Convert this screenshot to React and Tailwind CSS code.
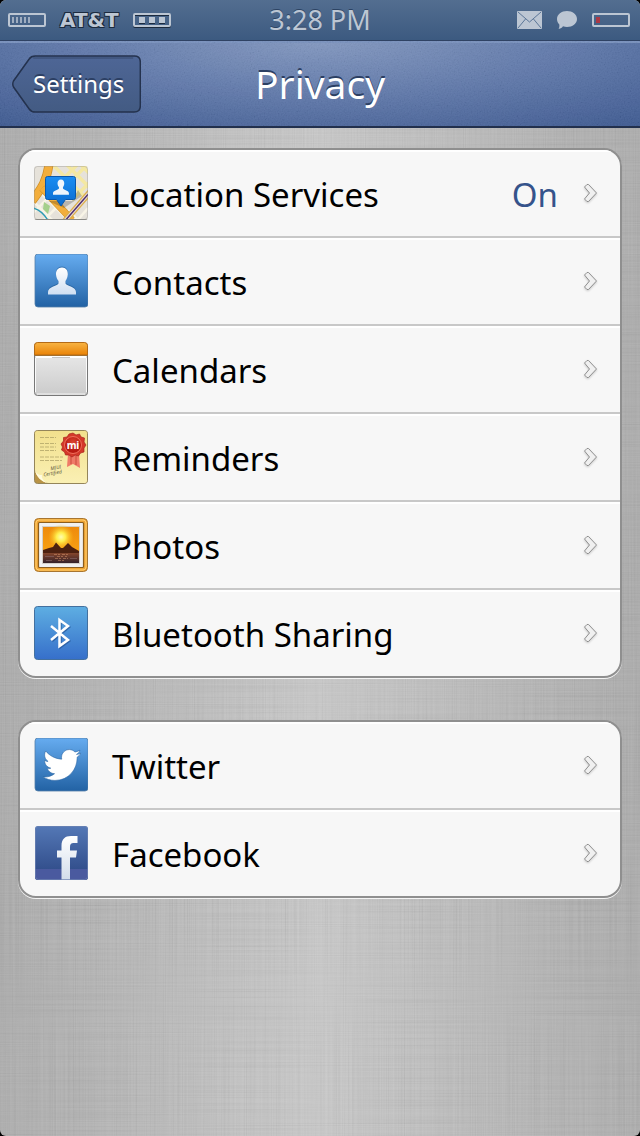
import React from 'react';
import { FaTwitter } from 'react-icons/fa';

// Brushed metal / grain overlay, stretched over its parent
const Texture = ({ id, frequency, opacity, octaves = 2 }) => (
  <svg className="pointer-events-none absolute inset-0 h-full w-full" aria-hidden="true">
    <filter id={id} x="0" y="0" width="100%" height="100%">
      <feTurbulence type="fractalNoise" baseFrequency={frequency} numOctaves={octaves} />
      <feColorMatrix type="matrix" values="1.6 0 0 0 -0.3  1.6 0 0 0 -0.3  1.6 0 0 0 -0.3  0 0 0 0 1" />
    </filter>
    <rect width="100%" height="100%" filter={`url(#${id})`} opacity={opacity} />
  </svg>
);

const Person = ({ fill, ...props }) => (
  <path
    fill={fill}
    d="M28 14 C32 14 34 17 33.800 21 C33.600 24 32.500 26 31.500 27.500 L31.500 30 C33 33 42 33 42 38.500 L42 41 L14 41 L14 38.500 C14 33 23 33 24.500 30 L24.500 27.500 C23.300 26 22.200 24 22 21 C21.800 17 24 14 28 14 Z"
    {...props}
  />
);

const IconFrame = ({ children }) => (
  <svg className="size-[54px] shrink-0" viewBox="0 0 54 54" aria-hidden="true">
    {children}
  </svg>
);

const LocationIcon = () => (
  <IconFrame>
    <defs>
      <clipPath id="loc-clip"><rect width="54" height="54" rx="3" /></clipPath>
      <linearGradient id="loc-pin" x1="0" y1="0" x2="0" y2="1">
        <stop offset="0" stopColor="#1b8df2" />
        <stop offset="1" stopColor="#0a6cd0" />
      </linearGradient>
    </defs>
    <g clipPath="url(#loc-clip)" fill="none">
      <rect width="54" height="54" fill="#e6e2da" />
      <path d="M20 0 L54 34 M32 -2 L58 24 M44 -4 L60 12 M54 -2 L30 22 M44 -2 L24 18 M60 12 L38 34" stroke="#f4e8a2" strokeWidth="3.500" />
      <path d="M0 36 L18 54 M6 26 L34 54 M-2 48 L14 32 M8 56 L26 38 M44 54 L34 44 M54 42 L42 56" stroke="#f8f4e6" strokeWidth="2.500" />
      <path d="M10 36 L16 40 L14 48 L9 43 Z" fill="#a5d08c" />
      <path d="M15 -2 C13 14 8 22 -2 35" stroke="#cf8e25" strokeWidth="9" />
      <path d="M15 -2 C13 14 8 22 -2 35" stroke="#f3ae3c" strokeWidth="7.500" />
      <path d="M8 22 L38 54" stroke="#d09229" strokeWidth="7" />
      <path d="M8 22 L38 54" stroke="#f3ae3c" strokeWidth="6" />
      <path d="M56 26 L30 56" stroke="#dcae4b" strokeWidth="6" />
      <path d="M56 26 L30 56" stroke="#eadfd8" strokeWidth="3.500" />
      <path d="M56 26 L30 56" stroke="#51306f" strokeWidth="1.500" />
      <path d="M-1 42 C7 44 11 49 15 56" stroke="#2a9bb5" strokeWidth="1.500" />
      <path d="M14 35 H38 L44 24 L48 30 L30 42 Z" fill="#000" opacity=".2" />
      <path d="M13.500 10.500 H39.500 Q41.500 10.500 41.500 12.500 V31.500 Q41.500 33.500 39.500 33.500 H31.500 L27 40 L22.500 33.500 H13.500 Q11.500 33.500 11.500 31.500 V12.500 Q11.500 10.500 13.500 10.500 Z" fill="url(#loc-pin)" stroke="#0a58ad" />
      <Person fill="#eef5fc" transform="translate(11 5.500) scale(.57)" />
      <path d="M0 53.500 H54" stroke="#8d8a85" />
    </g>
    <rect x=".5" y=".5" width="53" height="53" rx="3" fill="none" stroke="#8a8a8a" strokeOpacity=".35" />
  </IconFrame>
);

const ContactsIcon = () => (
  <IconFrame>
    <defs>
      <linearGradient id="con-bg" x1="0" y1="0" x2="0" y2="1">
        <stop offset="0" stopColor="#66acf0" />
        <stop offset="1" stopColor="#2262a4" />
      </linearGradient>
      <linearGradient id="con-fg" x1="0" y1="0" x2="0" y2="1">
        <stop offset="0" stopColor="#fff" />
        <stop offset="1" stopColor="#cfdff2" />
      </linearGradient>
    </defs>
    <rect x="1" width="53" height="53" rx="3" fill="url(#con-bg)" stroke="#537fa8" strokeWidth=".8" />
    <Person fill="#184f88" opacity=".5" transform="translate(0 -1.500)" />
    <Person fill="url(#con-fg)" transform="translate(0 -.5)" />
  </IconFrame>
);

const CalendarIcon = () => (
  <IconFrame>
    <defs>
      <linearGradient id="cal-top" x1="0" y1="0" x2="0" y2="1">
        <stop offset="0" stopColor="#f8b443" />
        <stop offset="1" stopColor="#e98206" />
      </linearGradient>
      <linearGradient id="cal-page" x1="0" y1="0" x2="0" y2="1">
        <stop offset="0" stopColor="#efefef" />
        <stop offset="1" stopColor="#cbcbcb" />
      </linearGradient>
    </defs>
    <rect x=".5" y="1" width="53" height="52.500" rx="3" fill="url(#cal-page)" stroke="#777" />
    <path d="M.5 13 V3.500 Q.5 .5 3.500 .5 H50.500 Q53.500 .5 53.500 3.500 V13 Z" fill="url(#cal-top)" stroke="#b46b16" />
    <path d="M1 13.500 H53" stroke="#a3702e" />
    <path d="M2 15 H52" stroke="#fff" strokeWidth="2" />
    <path d="M18 15.500 H36" stroke="#c4c4c4" />
    <path d="M1.500 16 V50 M52.500 16 V50" stroke="#fafafa" />
    <path d="M3 52 H51" stroke="#f3f3f3" />
  </IconFrame>
);

const RemindersIcon = () => (
  <IconFrame>
    <defs>
      <linearGradient id="rem-bg" x1="0" y1="0" x2="0" y2="1">
        <stop offset="0" stopColor="#f2e08d" />
        <stop offset="1" stopColor="#faf0b4" />
      </linearGradient>
      <radialGradient id="rem-seal" cy=".35">
        <stop offset="0" stopColor="#dc4532" />
        <stop offset="1" stopColor="#b81a12" />
      </radialGradient>
    </defs>
    <rect x=".5" y=".5" width="53" height="53" rx="3" fill="#b99345" stroke="#94855a" />
    <path d="M1 3 Q1 1 3 1 H51 Q53 1 53 3 V51 Q53 53 51 53 H14 C8 52 2 46 1 40 Z" fill="url(#rem-bg)" />
    <path d="M1 40 C2 43 4 45 8 45 C7 48 10 52 14 53 C7 52 2 46 1 40 Z" fill="#fffbe0" />
    <path d="M6 7.500 H22 M6 13.500 H22 M6 17 H22 M6 20.500 H22 M6 27 H29 M6 30.500 H28" stroke="#a99d62" strokeDasharray="4 1" opacity=".7" />
    <path d="M34 24 L33 37 L39 34 L46 38 L45 24 Z" fill="#ef7b68" />
    <path d="M37 26 V34 M42 26 V35" stroke="#c94c3b" />
    <path
      d="M39 3 L42 5 L45.500 4 L47 7 L50.500 8 L50 12 L52 15 L50 18 L50 22 L46.500 23 L44.500 26 L41 25 L38 27 L35 25 L31.500 25 L30.500 22 L27.500 20 L28.500 17 L27 14 L29.500 11 L29.500 7.500 L33 7 L35 4 Z"
      fill="#d4382a"
      stroke="#a8241c"
      strokeWidth=".7"
    />
    <circle cx="39" cy="15" r="8.500" fill="url(#rem-seal)" stroke="#ef705c" />
    <text x="39" y="19" textAnchor="middle" fill="#fff" className="font-['Noto_Sans',sans-serif] text-[10px] font-bold">mi</text>
    <g fill="#5d573a" className="font-['Noto_Sans',sans-serif] text-[5px] italic" transform="rotate(-10 18 42)">
      <text x="17" y="40">MIUI</text>
      <text x="9" y="45">Certified</text>
    </g>
  </IconFrame>
);

const PhotosIcon = () => (
  <IconFrame>
    <defs>
      <linearGradient id="pho-sky" x1="0" y1="0" x2="0" y2="1">
        <stop offset="0" stopColor="#ee8a0c" />
        <stop offset=".65" stopColor="#f7a013" />
        <stop offset="1" stopColor="#e36c0b" />
      </linearGradient>
      <linearGradient id="pho-sea" x1="0" y1="0" x2="0" y2="1">
        <stop offset="0" stopColor="#8d4a2c" />
        <stop offset="1" stopColor="#35222a" />
      </linearGradient>
      <radialGradient id="pho-sun">
        <stop offset="0" stopColor="#fffbb0" />
        <stop offset=".35" stopColor="#ffee4d" />
        <stop offset="1" stopColor="#f9b316" stopOpacity="0" />
      </radialGradient>
    </defs>
    <rect x=".5" y=".5" width="53" height="53" rx="4" fill="#f0a535" stroke="#a8752f" />
    <rect x="2" y="2" width="50" height="50" rx="3" fill="none" stroke="#ffcf70" />
    <rect x="4.500" y="4.500" width="45" height="45" rx="1" fill="#f1f1f1" stroke="#8c5e1e" strokeWidth="1.200" />
    <rect x="8.500" y="8.500" width="37" height="37" fill="url(#pho-sky)" stroke="#d4cfc8" />
    <circle cx="27" cy="19" r="13" fill="url(#pho-sun)" />
    <rect x="9" y="34" width="36" height="11" fill="url(#pho-sea)" />
    <path d="M9 35 V32 L15 30 L19 29 L22 24.500 L27 30 L29 30 L34 25 L38 29 L45 33 V35 Z" fill="#4c2110" />
    <path d="M20 36.500 H35 M23 38.500 H33 M21 40.500 H34 M24 42.500 H32" stroke="#dc9b72" strokeWidth=".8" strokeDasharray="3 1 2 2" opacity=".6" />
    <path d="M11 38.500 H20 M36 40.500 H43 M12 42.500 H18" stroke="#8a6a6b" opacity=".6" />
  </IconFrame>
);

const BluetoothIcon = () => (
  <IconFrame>
    <defs>
      <linearGradient id="blu-bg" x1="0" y1="0" x2="0" y2="1">
        <stop offset="0" stopColor="#5eaee2" />
        <stop offset="1" stopColor="#366fca" />
      </linearGradient>
    </defs>
    <rect x=".5" y=".5" width="53" height="53" rx="3" fill="url(#blu-bg)" stroke="#43709f" />
    <path d="M17 20 L34 34 L25.500 40 V14 L34 20 L17 34" fill="none" stroke="#1f4f90" strokeWidth="2.500" opacity=".6" transform="translate(1 1)" />
    <path d="M17 20 L34 34 L25.500 40 V14 L34 20 L17 34" fill="none" stroke="#fff" strokeWidth="2.500" />
  </IconFrame>
);

const TwitterIcon = () => (
  <IconFrame>
    <defs>
      <linearGradient id="twi-bg" x1="0" y1="0" x2="0" y2="1">
        <stop offset="0" stopColor="#66acf0" />
        <stop offset="1" stopColor="#2262a4" />
      </linearGradient>
    </defs>
    <rect x="1" width="53" height="53" rx="3" fill="url(#twi-bg)" stroke="#537fa8" strokeWidth=".8" />
    <FaTwitter x="9" y="8" size={38} color="#fff" stroke="#2a66a3" strokeWidth="8" />
  </IconFrame>
);

const FacebookIcon = () => (
  <IconFrame>
    <defs>
      <linearGradient id="fb-bg" x1="0" y1="0" x2="0" y2="1">
        <stop offset="0" stopColor="#5478b6" />
        <stop offset="1" stopColor="#2b4683" />
      </linearGradient>
      <linearGradient id="fb-fg" x1="0" y1="0" x2="0" y2="1">
        <stop offset="0" stopColor="#fff" />
        <stop offset="1" stopColor="#d3ddea" />
      </linearGradient>
      <clipPath id="fb-clip"><rect x="1" width="53" height="54" rx="3" /></clipPath>
    </defs>
    <g clipPath="url(#fb-clip)">
      <rect x="1" width="53" height="54" fill="url(#fb-bg)" />
      <rect x="1" y="43" width="53" height="11" fill="#4a5a9f" />
      <path d="M27.500 54 V31.500 H23 V24.500 H27.500 V20 C27.500 13 31 10 37 10 H43.500 V17 H39.500 C37 17 36 18.500 36 21 V24.500 H43 L42 31.500 H36 V54 Z" fill="url(#fb-fg)" />
    </g>
    <rect x="1.500" y=".5" width="52" height="53" rx="3" fill="none" stroke="#6d83b2" strokeOpacity=".7" />
  </IconFrame>
);

const Chevron = () => (
  <svg className="h-5 w-4 shrink-0 drop-shadow-[0_1px_1px_rgba(0,0,0,0.2)]" viewBox="0 0 16 20" aria-hidden="true">
    <path
      d="M5 1.500 L6.500 1.500 L14.500 10 L6.500 18.500 L5 18.500 L2.500 16 L7.500 10 L2.500 4 Z"
      fill="#f0f0f0"
      stroke="#8e8e8e"
      strokeLinejoin="round"
    />
  </svg>
);

const GROUPS = [
  [
    { label: 'Location Services', value: 'On', Icon: LocationIcon },
    { label: 'Contacts', Icon: ContactsIcon },
    { label: 'Calendars', Icon: CalendarIcon },
    { label: 'Reminders', Icon: RemindersIcon },
    { label: 'Photos', Icon: PhotosIcon },
    { label: 'Bluetooth Sharing', Icon: BluetoothIcon },
  ],
  [
    { label: 'Twitter', Icon: TwitterIcon },
    { label: 'Facebook', Icon: FacebookIcon },
  ],
];

const StatusBar = () => (
  <div className="grid h-10 grid-cols-[1fr_auto_1fr] items-center bg-linear-to-b from-[#536e90] to-[#3c5a80] px-2 text-[#bcc6d3]">
    <div className="flex items-center gap-[14px]">
      {/* Signal strength */}
      <svg className="h-[14px] w-[38px]" viewBox="0 0 38 14" aria-hidden="true">
        <rect x="1" y="1" width="36" height="12" rx="1" fill="none" stroke="currentColor" strokeWidth="2" />
        <path d="M5 4V10 M9 4V10 M13 4V10 M17 4V10 M21 4V10" stroke="currentColor" strokeWidth="1.500" />
      </svg>
      <span className="font-['DejaVu_Sans',sans-serif] text-[20px] leading-6 font-bold [text-shadow:1px_1px_0_#1c2b3f,-1px_-1px_0_#1c2b3f,1px_-1px_0_#1c2b3f,-1px_1px_0_#1c2b3f]">
        AT&amp;T
      </span>
      {/* Network type */}
      <svg className="h-[14px] w-[38px] drop-shadow-[0_1px_0_#1c2b3f]" viewBox="0 0 38 14" aria-hidden="true">
        <rect x="1" y="1" width="36" height="12" rx="1" fill="none" stroke="currentColor" strokeWidth="2" />
        <path d="M6 4h6v6h-6z M16 4h6v6h-6z M26 4h6v6h-6z" fill="currentColor" />
      </svg>
    </div>
    <time className="text-[27px] leading-8 [text-shadow:0_-1px_0_#2c4363]">3:28 PM</time>
    <div className="flex items-center justify-end gap-[15px]">
      <svg className="h-[18px] w-[25px]" viewBox="0 0 25 18" aria-hidden="true">
        <rect width="25" height="18" rx="1" fill="currentColor" />
        <path d="M1 1 L12.500 11 L24 1 M1 17 L8.500 8 M24 17 L16.500 8" fill="none" stroke="#5b7697" />
      </svg>
      <svg className="h-[18px] w-5" viewBox="0 0 20 18" aria-hidden="true">
        <path d="M10 0 C15.500 0 20 3.500 20 8 C20 12.500 15.500 16 10 16 C8.500 16 7.500 15.800 6 15.300 C5 17 4 17.500 1.500 18 C2.500 16.500 2.500 15 2.300 13.500 C.8 12 0 10 0 8 C0 3.500 4.500 0 10 0 Z" fill="currentColor" />
      </svg>
      {/* Battery, almost empty */}
      <svg className="mr-0.5 h-[14px] w-[38px]" viewBox="0 0 38 14" aria-hidden="true">
        <rect x="1" y="1" width="36" height="12" rx="1" fill="none" stroke="currentColor" strokeWidth="2" />
        <rect x="4" y="4" width="4" height="6" fill="#ab3946" />
      </svg>
    </div>
  </div>
);

const NavBar = () => (
  <header className="relative h-[88px] border-t border-b-2 border-t-[#2f4263] border-b-[#22304d] bg-[radial-gradient(ellipse_85%_140%_at_50%_0%,#8398c0_0%,#5d76a8_50%,#39558d_100%)] shadow-[inset_0_2px_0_#7991bd]">
    <Texture id="nav-grain" frequency="0.7" opacity="0.05" />
    <div className="relative grid h-full grid-cols-[1fr_auto_1fr] items-center px-[11px]">
      <button type="button" className="relative h-[58px] justify-self-start pr-[17px] pl-[22px] text-[24px] text-white [text-shadow:0_-2px_0_#2c3f63]">
        <svg className="absolute inset-0 h-full w-full" viewBox="0 0 129 58" preserveAspectRatio="none" aria-hidden="true">
          <defs>
            <linearGradient id="back-bg" x1="0" y1="0" x2="0" y2="1">
              <stop offset="0" stopColor="#4e6696" />
              <stop offset="1" stopColor="#435b83" />
            </linearGradient>
          </defs>
          <path
            d="M24 1 H122 Q128 1 128 7 V51 Q128 57 122 57 H24 Q20 57 18 54 L2.500 32 Q1 29 2.500 26 L18 4 Q20 1 24 1 Z"
            fill="url(#back-bg)"
            stroke="#24324e"
            strokeWidth="1.500"
          />
          <path d="M22 3 H121" stroke="#334669" strokeWidth="1.500" opacity=".6" />
        </svg>
        <span className="relative">Settings</span>
      </button>
      <h1 className="text-[39px] leading-10 text-white [text-shadow:0_-2px_0_#2c3f63]">Privacy</h1>
    </div>
  </header>
);

const SettingsRow = ({ label, value, Icon }) => (
  <li>
    <a href="#" className="flex h-[86px] items-center gap-6 pr-[22px] pb-px pl-[14px] shadow-[inset_0_2px_0_#fff]">
      <Icon />
      <span className="grow pt-1 text-[33px] leading-10 text-black">{label}</span>
      {value && <span className="pt-1 text-[33px] leading-10 text-[#35538b]">{value}</span>}
      <Chevron />
    </a>
  </li>
);

const App = () => (
  <div className="min-h-screen bg-black font-['Noto_Sans',sans-serif]">
    <div className="relative flex min-h-screen flex-col overflow-hidden rounded-md bg-linear-to-r from-[#acacac] via-[#c9c9c9] to-[#acacac]">
      <Texture id="brush-h" frequency="0.006 0.9" opacity="0.05" octaves={1} />
      <Texture id="brush-v" frequency="0.9 0.006" opacity="0.05" octaves={1} />
      <div className="relative">
        <StatusBar />
        <NavBar />
        <main className="flex flex-col gap-[42px] px-[18px] py-5">
          {GROUPS.map((rows, index) => (
            <ul
              key={index}
              className="divide-y-2 divide-[#c8c8c8] overflow-hidden rounded-[18px] border-2 border-[#8f8f8f] bg-[#f7f7f7] shadow-[0_1px_0_#f4f4f4]"
            >
              {rows.map((row) => (
                <SettingsRow key={row.label} {...row} />
              ))}
            </ul>
          ))}
        </main>
      </div>
    </div>
  </div>
);

export default App;
